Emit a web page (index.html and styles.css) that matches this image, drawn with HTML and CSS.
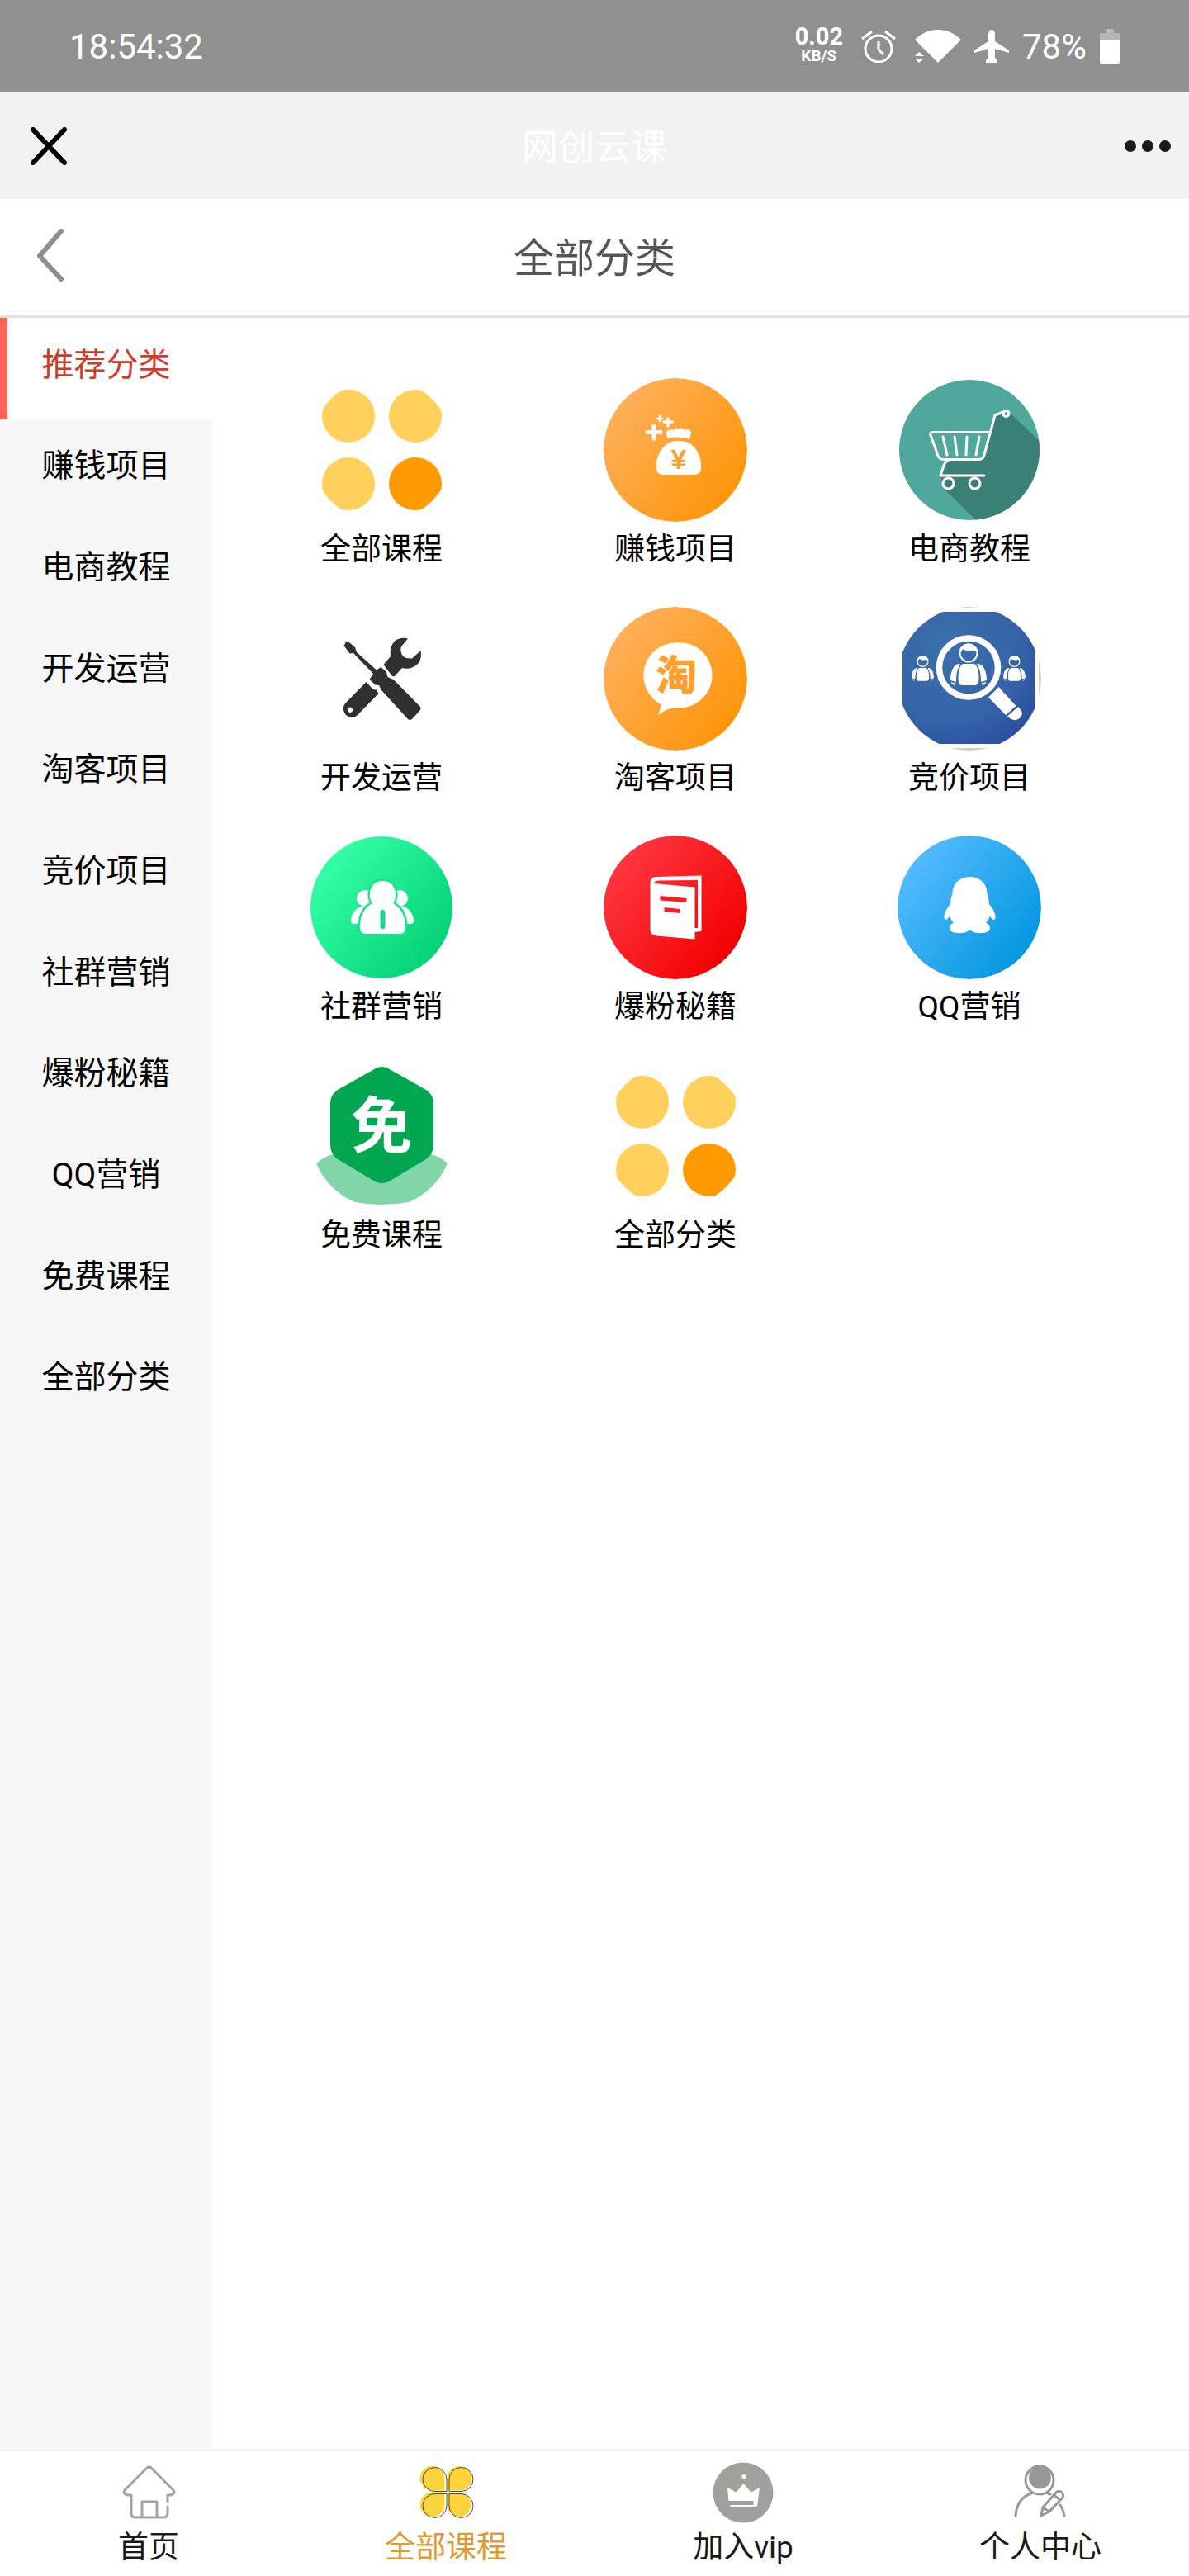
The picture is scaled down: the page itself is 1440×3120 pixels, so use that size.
FILE: index.html
```html
<!DOCTYPE html>
<html lang="zh-CN">
<head>
<meta charset="utf-8">
<meta name="viewport" content="width=device-width, initial-scale=1">
<title>全部分类</title>
<link rel="stylesheet" href="styles.css">
</head>
<body>
<svg class="defs" aria-hidden="true">
  <defs>
    <linearGradient id="g-orange" x1="0" y1="0.1" x2="1" y2="0.9"><stop offset="0.1" stop-color="#ffb05a"/><stop offset="0.9" stop-color="#ff950a"/></linearGradient>
    <linearGradient id="g-green" x1="0" y1="0.1" x2="1" y2="0.9"><stop offset="0.1" stop-color="#34ffa6"/><stop offset="0.9" stop-color="#04d277"/></linearGradient>
    <linearGradient id="g-red" x1="0" y1="0.1" x2="1" y2="0.9"><stop offset="0.1" stop-color="#ff3640"/><stop offset="0.9" stop-color="#f30000"/></linearGradient>
    <linearGradient id="g-sky" x1="0" y1="0.1" x2="1" y2="0.9"><stop offset="0.1" stop-color="#54bbff"/><stop offset="0.9" stop-color="#0397df"/></linearGradient>
    <radialGradient id="g-navy" cx="0.35" cy="0.3" r="0.9"><stop offset="0" stop-color="#3b70ab"/><stop offset="0.6" stop-color="#3563a8"/><stop offset="1" stop-color="#28479b"/></radialGradient>
    <symbol id="dots" viewBox="0 0 174 174">
      <g fill="#ffd15c"><circle cx="47" cy="46" r="32"/><circle cx="128" cy="46" r="32"/><circle cx="47" cy="128" r="32"/></g>
      <circle cx="128" cy="128" r="32" fill="#ff9b00"/>
    </symbol>
    <g id="person">
      <circle r="10.5" fill="none" stroke="#fff" stroke-width="2"/>
      <path d="M-11 0C-11-7-6-11.500 0-11.500S11-7 11 0C9-3 7-4 5-3C0-2-4-3-7-5C-8-3-9-1-11 0Z" fill="#fff"/>
      <path d="M-7 13H7C11 16 12.500 22 12.500 30C12.500 37 11 39 7 39H-7C-11 39-12.500 37-12.500 30C-12.500 22-11 16-7 13ZM-12 13C-19 14-22 24-22 33L-15 35C-15 26-14 20-10 13ZM12 13C19 14 22 24 22 33L15 35C15 26 14 20 10 13ZM-21 35L-15 37C-17 40-21 38-21 35ZM21 35L15 37C17 40 21 38 21 35Z" fill="#fff"/>
    </g>
  </defs>
</svg>

<div class="status">
  <time class="status-time">18:54:32</time>
  <div class="status-info">
    <div class="speed"><b>0.02</b><small>KB/S</small></div>
    <svg class="i-alarm" viewBox="0 0 42 40" width="42" height="40" fill="none" stroke="#fff" stroke-width="3"><circle cx="21" cy="23" r="16"/><path d="M21 14V24L27 30M1 11L13 2M41 11L29 2"/></svg>
    <svg class="i-wifi" viewBox="0 0 56 40" width="56" height="40" fill="#fff"><path d="M28 40L0 12C16-4 40-4 56 12ZM0 32L5 27L11 32ZM0 35H11L5 40Z"/></svg>
    <svg class="i-plane" viewBox="0 0 42 40" width="42" height="40" fill="#fff"><path d="M21 0C24 0 25 3 25 6V14L42 25V28L25 23V34L28 37V40H14V37L17 34V23L0 28V25L17 14V6C17 3 18 0 21 0Z"/></svg>
    <span class="status-percent">78%</span>
    <svg class="i-battery" viewBox="0 0 24 42" width="24" height="42"><path d="M7 0H17V5H22Q24 5 24 7V14H0V7Q0 5 2 5H7Z" fill="#b5b5b5"/><path d="M0 13H24V40Q24 42 22 42H2Q0 42 0 40Z" fill="#fff"/></svg>
  </div>
</div>

<div class="navbar">
  <button class="bar-button" type="button" aria-label="关闭"><svg viewBox="0 0 46 46" width="46" height="46"><path d="M4 3L42 43M42 3L4 43" stroke="#000" stroke-width="6" stroke-linecap="round"/></svg></button>
  <span class="navbar-title">网创云课</span>
  <button class="bar-button bar-button-end" type="button" aria-label="更多"><svg viewBox="0 0 56 14" width="56" height="14" fill="#1a1a1a"><circle cx="7" cy="7" r="7"/><circle cx="28" cy="7" r="7"/><circle cx="49" cy="7" r="7"/></svg></button>
</div>

<header class="header">
  <button class="back" type="button" aria-label="返回"><svg viewBox="0 0 34 64" width="34" height="64"><path d="M30 3L4 33L30 61" fill="none" stroke="#8e8e8e" stroke-width="6" stroke-linecap="round" stroke-linejoin="round"/></svg></button>
  <h1 class="header-title">全部分类</h1>
</header>

<main class="main">
  <nav class="side" aria-label="分类">
    <ul class="side-list">
      <li><a class="side-link side-link-active" href="#">推荐分类</a></li>
      <li><a class="side-link" href="#">赚钱项目</a></li>
      <li><a class="side-link" href="#">电商教程</a></li>
      <li><a class="side-link" href="#">开发运营</a></li>
      <li><a class="side-link" href="#">淘客项目</a></li>
      <li><a class="side-link" href="#">竞价项目</a></li>
      <li><a class="side-link" href="#">社群营销</a></li>
      <li><a class="side-link" href="#">爆粉秘籍</a></li>
      <li><a class="side-link" href="#">QQ营销</a></li>
      <li><a class="side-link" href="#">免费课程</a></li>
      <li><a class="side-link" href="#">全部分类</a></li>
    </ul>
  </nav>

  <section class="tiles">
    <a class="tile" href="#"><svg class="tile-icon" viewBox="0 0 174 174"><use href="#dots"/></svg>全部课程</a>

    <a class="tile" href="#"><svg class="tile-icon" viewBox="0 0 174 174">
      <circle cx="87" cy="87" r="87" fill="url(#g-orange)"/>
      <path d="M91 76C83 76 78 78 74 82C68 88 64 95 64 106V109C64 114 67 117 72 117H110C115 117 118 114 118 109V106C118 95 114 88 108 82C104 78 99 76 91 76Z" fill="#fff"/>
      <path d="M78 73C75 69 76 65 77 64C80 62 83 62 85 63C87 60 89 60 91 62C93 60 96 60 98 63C101 61 104 62 106 65C106 68 105 71 104 74C96 71 86 71 78 73Z" fill="#fff"/>
      <g stroke="#fff" stroke-linecap="round"><path d="M61 58V73M53 65.500H69" stroke-width="5"/><path d="M78 49V58M73 53H83" stroke-width="3.500"/><path d="M68 45.500V52M65 49H71" stroke-width="2.500"/></g>
      <text class="art-yen" x="91" y="110" text-anchor="middle">¥</text>
    </svg>赚钱项目</a>

    <a class="tile" href="#"><svg class="tile-icon" viewBox="0 0 174 174">
      <clipPath id="c-cart"><circle cx="87" cy="87" r="85"/></clipPath>
      <circle cx="87" cy="87" r="85" fill="#50a89d"/>
      <path clip-path="url(#c-cart)" d="M136 42L174 78V174H97L56 134L52 118L61 100H100L106 95L118 46Z" fill="#3a8077"/>
      <g fill="none" stroke="#fff" stroke-width="3" stroke-linecap="round" stroke-linejoin="round">
        <circle cx="131.500" cy="43" r="3.500"/>
        <path d="M128 41L118 45L105 93Q104 98.500 98 98.500H56Q51 98.500 49 94L40 69Q39 65.500 43 65.500H112M62 99Q58 100 56 106L52 118H105M55 71L60 93M69 71L72 93M84 71L83 93M99 71L95 93"/>
        <circle cx="61.500" cy="127.500" r="6.500"/><circle cx="93.500" cy="127.500" r="6.500"/>
      </g>
    </svg>电商教程</a>

    <a class="tile" href="#"><svg class="tile-icon" viewBox="0 0 174 174" fill="#303030">
      <path d="M44.600 41.500L48.500 43.500L55 49L57 55L81 76.500L86.500 73L93 79L94.500 85L101.500 88L134 121Q135 123 134 125L124 136Q121 138 119 136L87 101L84 95L79.500 94.500L72.500 88L77 81L53 56L48.500 56.500L41.500 47Z"/>
      <path d="M119 38.500C113 37 107 38 103 41.500C98 47 97 53 98 60L89.500 70L97 80L99 83Q101 85 103 84L112 74C119 76 126 74 131 69C136 63 135 57 134.500 53L124 62.500Q117 63 113 60Q109 54 111 48Z"/>
      <path fill-rule="evenodd" d="M68.500 91L75 98Q77 101 81 100.500L83.500 105L58 131C53 136 45 134 42 128C40 123 41 119 44 116ZM49 121.500A3.200 3.200 0 1 0 49.100 121.500Z"/>
    </svg>开发运营</a>

    <a class="tile" href="#"><svg class="tile-icon" viewBox="0 0 174 174">
      <circle cx="87" cy="87" r="87" fill="url(#g-orange)"/>
      <path d="M87.500 43.500A39.500 39.500 0 1 1 87.500 122Q76 123 66 131Q69 124 69.500 118A39.500 39.500 0 0 1 87.500 43.500Z" fill="#fff"/>
      <text class="art-tao" x="88" y="101" text-anchor="middle">淘</text>
    </svg>淘客项目</a>

    <a class="tile" href="#"><svg class="tile-icon" viewBox="0 0 174 174">
      <rect width="174" height="174" fill="#d3d0cc"/>
      <rect y="1" width="171" height="170" fill="#fff"/>
      <rect x="6" y="6" width="160" height="160" fill="url(#g-navy)"/>
      <circle cx="86" cy="73.500" r="35.500" fill="none" stroke="#fff" stroke-width="7.500"/>
      <path d="M122.500 97L143.500 120L131 131L110 109.500ZM146 121Q154 128 149 134Q142 141 133 132.500Z" fill="#fff"/>
      <use href="#person" transform="translate(86 56)"/>
      <use href="#person" transform="translate(30.500 66) scale(.61)"/>
      <use href="#person" transform="translate(141.500 66) scale(.61)"/>
    </svg>竞价项目</a>

    <a class="tile" href="#"><svg class="tile-icon" viewBox="0 0 174 174">
      <circle cx="87" cy="87" r="86" fill="url(#g-green)"/>
      <g fill="#fff"><circle cx="67" cy="76" r="10"/><circle cx="109" cy="76" r="10"/><path d="M62 86C54 89 50 97 50 104Q50 107 54 107H66L76 86ZM114 86C122 89 126 97 126 104Q126 107 122 107H110L100 86Z"/></g>
      <path d="M76 82C66 87 61 97 61 111Q61 119 68 119H109Q116 119 116 111C116 97 110 87 101 82C107 74 105 55 88.500 55C72 55 70 74 76 82Z" fill="#fff" stroke="#1de28f" stroke-width="5" paint-order="stroke"/>
      <rect x="85.500" y="90" width="6" height="23" rx="3" fill="#16dc88"/>
    </svg>社群营销</a>

    <a class="tile" href="#"><svg class="tile-icon" viewBox="0 0 174 174">
      <circle cx="87" cy="87" r="87" fill="url(#g-red)"/>
      <path d="M63 50L118.500 48.500V116L110.500 117V125.500L64 121.500Q56.500 120 56.500 114V57Q57 51 63 50ZM66 54.500Q61 55 61 58L110.500 62.500V112H114V54Z" fill="#fff" fill-rule="evenodd"/>
      <path d="M68.500 73L100.500 76V81L68.500 78.500ZM73.500 87L92.500 89V94L73.500 92Z" fill="#f81d24"/>
    </svg>爆粉秘籍</a>

    <a class="tile" href="#"><svg class="tile-icon" viewBox="0 0 174 174">
      <circle cx="87" cy="87" r="87" fill="url(#g-sky)"/>
      <path d="M87.500 50C75 50 66.500 59 66.500 70C66.500 73 64.500 74 64.500 79Q64.500 81 64 83C58 90 55 98 57 101C59 104 62 99 63 97.500Q65 103 68 106C63 107 62 112 64 115C69 120 83 119 87.500 114C92 119 106 120 111 115C113 112 112 107 107 106Q110 103 112 97.500C113 99 116 104 118 101C120 98 117 90 111 83Q110.500 81 110.500 79C110.500 74 108.500 73 108.500 70C108.500 59 100 50 87.500 50Z" fill="#fff"/>
    </svg>QQ营销</a>

    <a class="tile" href="#"><svg class="tile-icon" viewBox="0 0 174 174">
      <path d="M8 120Q17 112 28 109H147Q158 112 167 120A87 87 0 0 1 120 167Q87 173 55 167A87 87 0 0 1 8 120Z" fill="#80d6a9"/>
      <path d="M80 5Q87.500 1 95 5L141 31Q150 37 150 47V97Q150 109 141 115L96 142Q87.500 146 79 142L34 115Q25 109 25 97V47Q25 37 34 31Z" fill="#00a650"/>
      <text class="art-free" x="87" y="101" text-anchor="middle">免</text>
    </svg>免费课程</a>

    <a class="tile" href="#"><svg class="tile-icon" viewBox="0 0 174 174"><use href="#dots"/></svg>全部分类</a>
  </section>
</main>

<nav class="tabs" aria-label="主导航">
  <a class="tab" href="#"><svg class="tab-icon" viewBox="0 0 74 74" fill="none" stroke="#a3a49f" stroke-width="3" stroke-linecap="round" stroke-linejoin="round"><path d="M16 40H12Q5 39 8 34L35 7Q37.500 5 40 7L67 34Q70 39 63 40H60V48M60 54V62Q60 67 55 67H21Q16 67 16 62V40M29 67V48H47V67"/></svg>首页</a>
  <a class="tab tab-active" href="#"><svg class="tab-icon" viewBox="0 0 74 74"><path d="M35 34H21A14.500 14.500 0 1 1 35 20ZM68 20A14 14 0 0 1 54 34H39V20A14.500 14.500 0 0 1 68 20ZM35 38V52A14.500 14.500 0 1 1 21 37H35ZM39 38H54A14 14 0 1 1 39 52Z" fill="#fdd33b" stroke="#fdd33b"/><path d="M38 35.500H24A14.500 14.500 0 1 1 38 21ZM41 35.500V21A14.500 14.500 0 1 1 56 35.500ZM38 38.500V53A14.500 14.500 0 1 1 24 38.500ZM41 38.500H56A14.500 14.500 0 1 1 41 53Z" fill="none" stroke="#4a4a42"/></svg>全部课程</a>
  <a class="tab" href="#"><svg class="tab-icon" viewBox="0 0 74 74"><circle cx="37" cy="37" r="36.500" fill="#a0a19c"/><path d="M18 31L28.500 36.500L37.500 26L46.500 36.500L57 31L54 54H21.500V52H49.500V47H19.500Z" fill="#fff"/><circle cx="38" cy="17.500" r="2.500" fill="#fff"/></svg>加入vip</a>
  <a class="tab" href="#"><svg class="tab-icon" viewBox="0 0 74 74" fill="none" stroke="#989898" stroke-width="3" stroke-linecap="round" stroke-linejoin="round"><circle cx="36" cy="22" r="17"/><circle cx="36.500" cy="19" r="12.500" fill="#989898" stroke-width="2"/><path d="M26 38C14 42 8 52 7 65M46 38L49 39M61 52Q65 58 66 65M40 55L55 38Q58 34 62 36Q66 39 64 43L48 60L38 65ZM40 55L48 60M53 40L61 46"/></svg>个人中心</a>
</nav>
</body>
</html>
```
FILE: styles.css
```css
* {
  box-sizing: border-box;
}

body {
  margin: 0;
  min-height: 100vh;
  display: flex;
  flex-direction: column;
  background: #fff;
  color: #000;
  font-family: Roboto, "Noto Sans CJK SC", sans-serif;
}

a {
  color: inherit;
  text-decoration: none;
}

button {
  border: 0;
  background: none;
  cursor: pointer;
}

svg {
  display: block;
  flex: none;
}

.defs {
  position: absolute;
  width: 0;
  height: 0;
}

/* Status bar */
.status {
  display: flex;
  align-items: center;
  justify-content: space-between;
  height: 112px;
  padding: 0 84px;
  background: #909090;
  color: #fff;
  font-size: 42px;
}

.status-info {
  display: flex;
  align-items: center;
  gap: 16px;
}

.speed {
  display: flex;
  flex-direction: column;
  align-items: center;
  margin-right: 6px;
  line-height: 24px;
}

.speed b {
  font-size: 29px;
}

.speed small {
  font-size: 19px;
  font-weight: 700;
}

.i-alarm {
  margin-right: 7px;
}

/* App bar */
.navbar {
  display: grid;
  grid-template-columns: 1fr auto 1fr;
  align-items: center;
  height: 129px;
  padding: 0 22px 0 36px;
  background: #f2f2f4;
}

.bar-button {
  justify-self: start;
  padding: 0;
}

.bar-button-end {
  justify-self: end;
}

.navbar-title {
  padding: 0 14px 4px 0;
  color: #fff;
  font-size: 44px;
}

/* Page header */
.header {
  display: grid;
  grid-template-columns: 1fr auto 1fr;
  align-items: center;
  height: 144px;
  padding: 0 44px 6px;
  border-bottom: 3px solid #e2e2e2;
}

.back {
  justify-self: start;
  padding: 0;
}

.header-title {
  margin: 0;
  color: #555;
  font-size: 49px;
  font-weight: 400;
}

/* Category list and tiles */
.main {
  flex: 1;
  display: flex;
}

.side {
  flex: none;
  width: 257px;
  background: #f7f7f7;
}

.side-list {
  display: grid;
  grid-auto-rows: 1fr;
  height: 1349px;
  margin: 0;
  padding: 0;
  list-style: none;
}

.side-link {
  display: flex;
  align-items: center;
  justify-content: center;
  height: 100%;
  padding-bottom: 17px;
  font-size: 39px;
}

.side-link-active {
  background: #fff linear-gradient(#ff6257, #ff6257) left / 9px 100% no-repeat;
  color: #cf3a2b;
}

.tiles {
  flex: 1;
  display: grid;
  grid-template-columns: repeat(3, 1fr);
  align-content: start;
  row-gap: 35px;
  padding: 73px 88px 73px 27px;
}

.tile {
  display: flex;
  flex-direction: column;
  align-items: center;
  font-size: 37px;
  line-height: 68px;
}

.tile-icon {
  width: 174px;
  height: 174px;
  border-radius: 50%;
}

.art-yen {
  fill: #ff9f2e;
  font: 700 34px "Liberation Sans", sans-serif;
}

.art-tao {
  fill: #ff9f2e;
  font: 900 50px "Noto Sans CJK SC", sans-serif;
}

.art-free {
  fill: #fff;
  font: 700 74px "Noto Sans CJK SC", sans-serif;
}

/* Bottom tabs */
.tabs {
  display: grid;
  grid-template-columns: repeat(4, 1fr);
  padding: 13px 0 4px;
  border-top: 3px solid #f2f2f2;
}

.tab {
  display: flex;
  flex-direction: column;
  align-items: center;
  color: #1a1a1a;
  font-size: 37px;
  line-height: 60px;
}

.tab-active {
  color: #df9a30;
}

.tab-icon {
  width: 74px;
  height: 74px;
}
```
